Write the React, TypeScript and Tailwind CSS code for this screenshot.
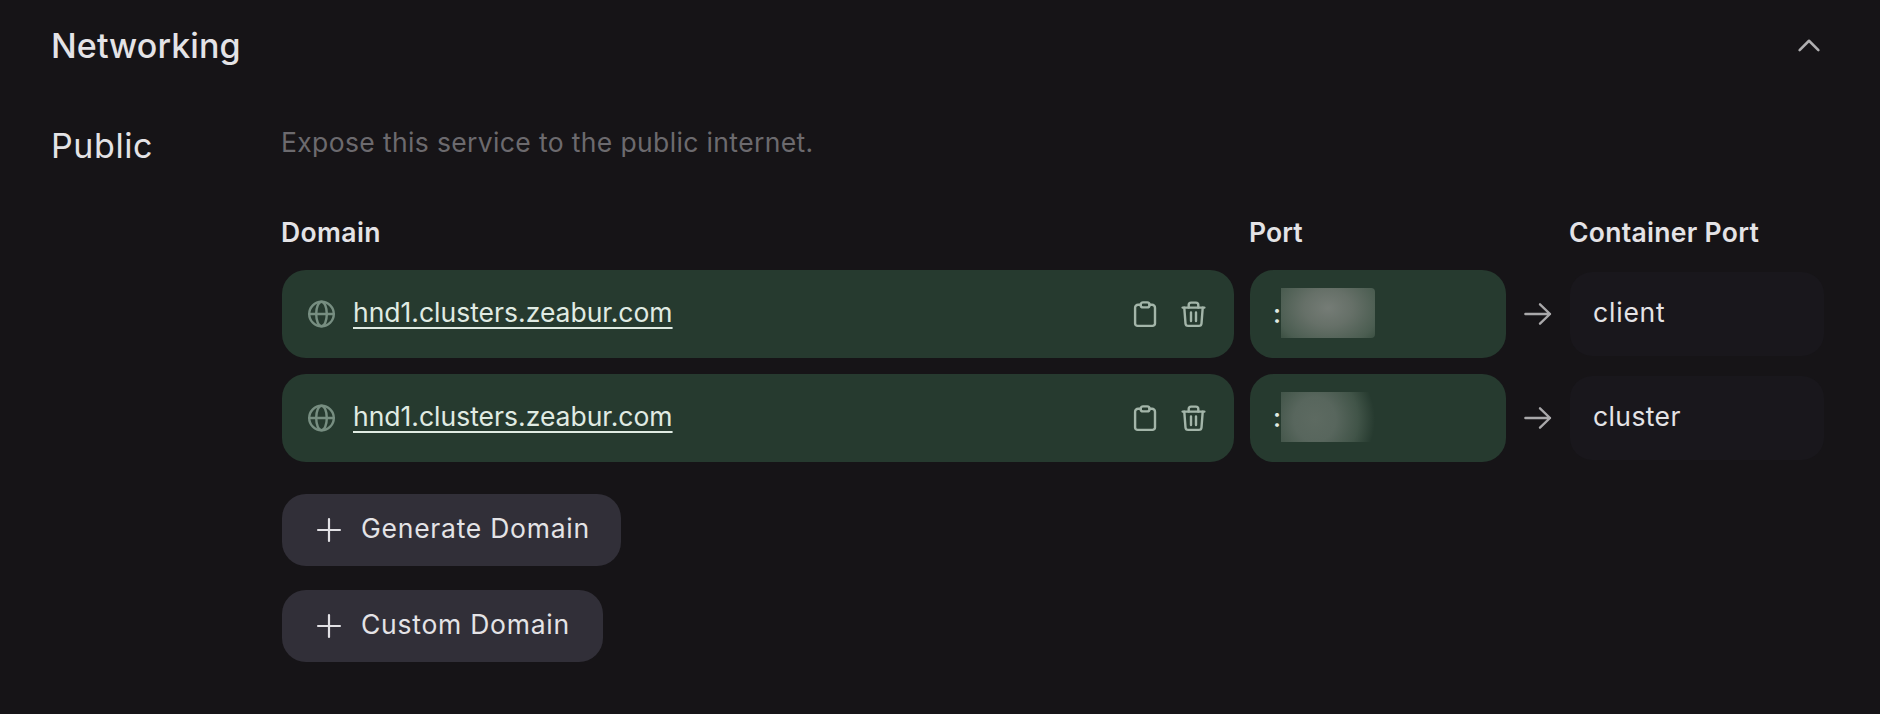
import type { ReactNode } from 'react';

function Icon({ className, width = 2.4, children }: { className: string; width?: number; children: ReactNode }) {
  return (
    <svg viewBox="0 0 32 32" className={`shrink-0 ${className}`} fill="none" stroke="currentColor" strokeWidth={width} strokeLinecap="round" strokeLinejoin="round" aria-hidden="true">
      {children}
    </svg>
  );
}

function GlobeIcon() {
  return (
    <Icon className="size-8 text-[#778e81]">
      <circle cx="15.5" cy="16" r="12.3" />
      <path d="M3.2 16h24.6" />
      <ellipse cx="15.5" cy="16" rx="5.3" ry="12.3" />
    </Icon>
  );
}

function ClipboardIcon() {
  return (
    <Icon className="size-8 text-[#a3b5a9]">
      <path d="M11.8 5.8H9.1a3 3 0 0 0-3 3v15.6a2.5 2.5 0 0 0 2.5 2.5h14.900a2.500 2.500 0 0 0 2.500-2.500V8.800a3 3 0 0 0-3-3h-2.700" />
      <rect x="11.600" y="3.400" width="9" height="5" rx="2.500" />
    </Icon>
  );
}

function TrashIcon() {
  return (
    <Icon className="size-8 text-[#a3b5a9]">
      <path d="M5.700 8.600h21.600" />
      <path d="M11.700 8.600V6a2.400 2.400 0 0 1 2.400-2.400h4.800A2.400 2.400 0 0 1 21.300 6v2.600" />
      <path d="M7.300 8.800l1.200 15.700a2.600 2.600 0 0 0 2.600 2.400h10.800a2.600 2.600 0 0 0 2.600-2.400l1.200-15.700" />
      <path d="M14 13.500v8.500M19 13.500v8.500" />
    </Icon>
  );
}

function ArrowIcon() {
  return (
    <Icon className="size-8 text-[#a9a8aa]">
      <path d="M3.400 16h24.600M18 6.300l10 9.700-10 9.700" />
    </Icon>
  );
}

function AddButton({ label, size }: { label: string; size: string }) {
  return (
    <button className={`flex h-[72px] items-center rounded-[24px] bg-[#312f38] pl-[34px] tracking-[0.75px] ${size}`}>
      <Icon className="mr-[19px] size-[26px] text-[#e2e1e5]" width={2.7}>
        <path d="M16 2.500v27M2.500 16h27" />
      </Icon>
      <span className="-mt-[4px]">{label}</span>
    </button>
  );
}

const rows = [
  {
    port: 'client',
    tracking: 'tracking-[0.8px]',
    mask: 'bg-[radial-gradient(ellipse_60px_46px_at_50%_40%,#757c76_0%,#667068_40%,#4b5d51_85%,#3d5144_100%)]',
  },
  {
    port: 'cluster',
    tracking: 'tracking-[0.4px]',
    mask: 'bg-[radial-gradient(ellipse_60px_64px_at_36%_55%,#5d6a61_0%,#58665d_35%,#415448_72%,#263a2f_100%)]',
  },
];

export default function App() {
  return (
    <main className="h-[714px] w-full overflow-hidden bg-[#161417] pr-[56px] pl-[52px] font-['Inter','Liberation_Sans',sans-serif] text-[26.5px] leading-[36px] text-[#e4e3e6]">
      <header className="flex h-[92px] items-center justify-between">
        <h2 className="-ml-px text-[34px] leading-[44px] font-medium tracking-[0.1px]">Networking</h2>
        <Icon className="mr-[3px] size-[24px] text-[#b0afb1]" width={3.4}>
          <path d="M3.500 21.500L16 9 28.500 21.500" />
        </Icon>
      </header>

      <section className="flex pt-[32px]">
        <h3 className="-ml-px w-[231px] shrink-0 text-[34px] leading-[44px] font-normal tracking-[0.6px]">Public</h3>
        <div className="min-w-0 flex-1">
          <p className="-ml-px tracking-[0.36px] text-[#6c6a6e]">Expose this service to the public internet.</p>

          <div className="mt-[54px] -ml-px flex h-[36px] font-semibold">
            <span className="w-[968px] tracking-[0.4px]">Domain</span>
            <span className="w-[320px] tracking-[0.1px]">Port</span>
            <span className="tracking-[0.3px]">Container Port</span>
          </div>

          <div className="mt-5 flex flex-col gap-4">
            {rows.map((row) => (
              <div key={row.port} className="flex h-[88px] items-center">
                <div className="flex h-full w-[952px] items-center rounded-[24px] bg-[#263a2f] pr-[25px] pl-[24px]">
                  <GlobeIcon />
                  <a href="#domain" className="-mt-[4px] ml-[15px] h-[36px] text-[#e0ebe3] underline decoration-2 underline-offset-[5px] [text-decoration-skip-ink:none]">
                    hnd1.clusters.zeabur.com
                  </a>
                  <div className="mt-[2px] ml-auto flex gap-4">
                    <ClipboardIcon />
                    <TrashIcon />
                  </div>
                </div>
                <div className="ml-4 flex h-full w-[256px] items-center rounded-[24px] bg-[#263a2f] pl-[23px] text-[#e0ebe3]">
                  <span className="-mt-[2px] w-[8px] font-medium">:</span>
                  <span className={`-mt-[2px] h-[50px] w-[94px] rounded-r-[4px] ${row.mask}`} />
                </div>
                <div className="flex w-[64px] justify-center">
                  <ArrowIcon />
                </div>
                <div className={`flex h-[84px] w-[254px] items-center rounded-[22px] bg-[#19171c] pl-[23px] ${row.tracking}`}>
                  <span className="-mt-[4px]">{row.port}</span>
                </div>
              </div>
            ))}
          </div>

          <div className="mt-8 flex flex-col gap-6">
            <AddButton label="Generate Domain" size="w-[339px]" />
            <AddButton label="Custom Domain" size="w-[321px]" />
          </div>
        </div>
      </section>
    </main>
  );
}
